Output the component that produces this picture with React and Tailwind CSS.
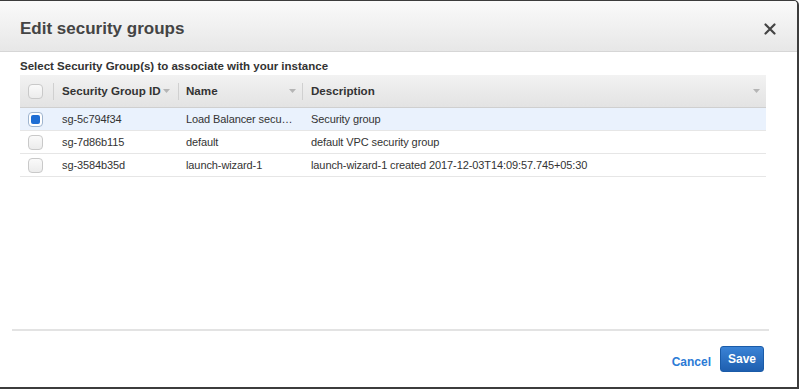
import React from "react";

const Caret = () => (
  <svg width="7" height="4" viewBox="0 0 7 4" className="shrink-0">
    <path d="M0 0 L7 0 L3.5 4 Z" fill="#b5b5b5" />
  </svg>
);

const Check = ({ checked }) =>
  checked ? (
    <div className="w-[15px] h-[15px] rounded-[4px] border border-[#9fb5cf] bg-white p-[2px]">
      <div className="w-full h-full rounded-[2px] bg-[#1f6ed4]" />
    </div>
  ) : (
    <div className="w-[15px] h-[15px] rounded-[4px] border border-[#c9c9c9] bg-gradient-to-b from-[#fafafa] to-[#ececec]" />
  );

const rows = [
  { id: "sg-5c794f34", name: "Load Balancer secu…", desc: "Security group", sel: true },
  { id: "sg-7d86b115", name: "default", desc: "default VPC security group" },
  { id: "sg-3584b35d", name: "launch-wizard-1", desc: "launch-wizard-1 created 2017-12-03T14:09:57.745+05:30" },
];

export default function App() {
  return (
    <div
      className="w-[800px] h-[389px] bg-white overflow-hidden"
      style={{ fontFamily: '"Liberation Sans", Arial, sans-serif' }}
    >
      <div className="w-[799px] h-[389px] border-t border-r-2 border-b-2 border-[#3c3c3c] rounded-tr-[5px] flex flex-col bg-white overflow-hidden">
        <div className="h-[51px] shrink-0 bg-gradient-to-b from-[#fafafa] to-[#e7e7e7] border-b border-[#d6d6d6] flex items-center justify-between pl-[20px] pr-[21px]">
          <div className="text-[17px] font-bold text-[#444] mt-[6px]">Edit security groups</div>
          <svg width="12" height="12" viewBox="0 0 12 12" className="mt-[6px]">
            <path d="M1.5 1.5 L10.5 10.5 M10.5 1.5 L1.5 10.5" stroke="#444" strokeWidth="2.2" strokeLinecap="round" />
          </svg>
        </div>
        <div className="px-[20px] pt-[6px] flex-1 flex flex-col">
          <div className="text-[11.5px] font-bold text-[#333] leading-[16px]">
            Select Security Group(s) to associate with your instance
          </div>
          <div className="mt-[1px] w-[746px]">
            <div className="h-[33px] flex items-center bg-gradient-to-b from-[#f2f2f2] to-[#e3e3e3] border-b border-[#cfcfcf] text-[11.6px] font-bold text-[#333]">
              <div className="w-[33px] h-full flex items-center pl-[8px]">
                <Check />
              </div>
              <div className="w-[1px] h-[17px] bg-[#d0d0d0]" />
              <div className="w-[124px] flex items-center justify-between pl-[8px] pr-[8px]">
                <span>Security Group ID</span>
                <Caret />
              </div>
              <div className="w-[1px] h-[17px] bg-[#d0d0d0]" />
              <div className="w-[123px] flex items-center justify-between pl-[7px] pr-[6px]">
                <span>Name</span>
                <Caret />
              </div>
              <div className="w-[1px] h-[17px] bg-[#d0d0d0]" />
              <div className="flex-1 flex items-center justify-between pl-[8px] pr-[6px]">
                <span>Description</span>
                <Caret />
              </div>
            </div>
            {rows.map((r) => (
              <div
                key={r.id}
                className={`h-[23px] flex items-center border-b border-[#e6e6e6] text-[11px] tracking-[-0.1px] text-[#333] ${r.sel ? "bg-[#eaf2fd]" : "bg-white"}`}
              >
                <div className="w-[34px] pl-[8px]">
                  <Check checked={r.sel} />
                </div>
                <div className="w-[124px] pl-[8px]">{r.id}</div>
                <div className="w-[125px] pl-[8px] whitespace-nowrap">{r.name}</div>
                <div className="flex-1 pl-[8px] whitespace-nowrap">{r.desc}</div>
              </div>
            ))}
          </div>
        </div>
        <div className="mx-[12px] mr-[28px] h-[2px] bg-[#e3e3e3] shrink-0" />
        <div className="h-[56px] shrink-0 flex items-center justify-end pr-[33px] pb-[1px]">
          <span className="text-[12px] font-bold text-[#2b7bd6] mr-[9px] mt-[6px]">Cancel</span>
          <button className="w-[44px] h-[26px] mt-[1px] rounded-[3px] border border-[#1a5ba8] bg-gradient-to-b from-[#3a83d6] to-[#1e5faf] text-white text-[12px] font-bold flex items-center justify-center">
            Save
          </button>
        </div>
      </div>
    </div>
  );
}
